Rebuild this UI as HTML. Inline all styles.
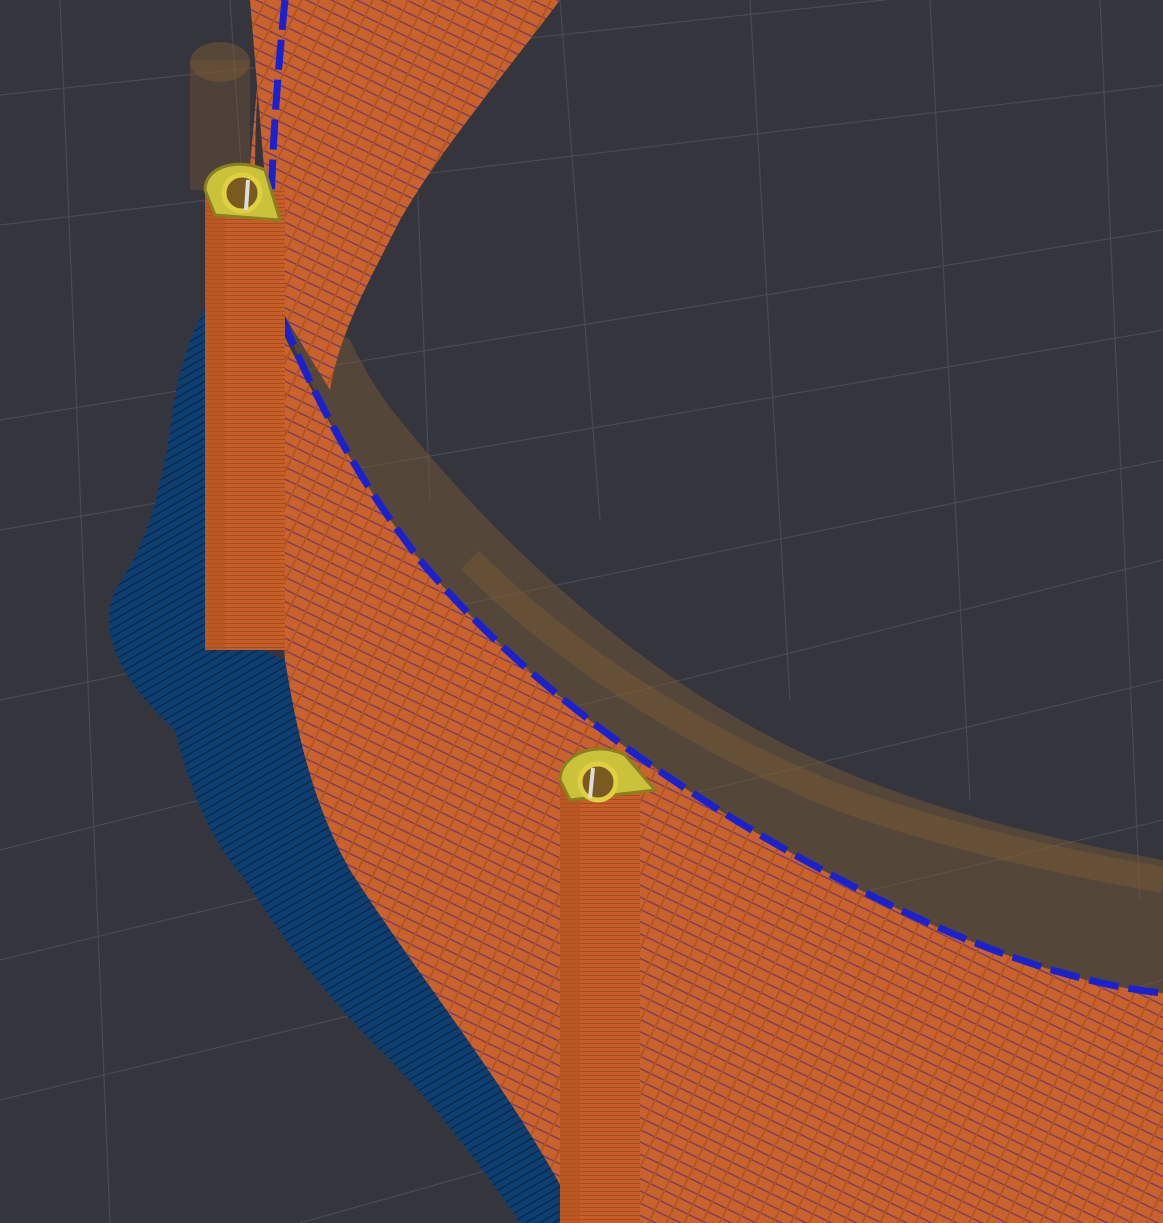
<!DOCTYPE html>
<html><head><meta charset="utf-8"><style>
html,body{margin:0;padding:0;background:#35353d;width:1163px;height:1223px;overflow:hidden}
</style></head><body>
<svg width="1163" height="1223" viewBox="0 0 1163 1223" xmlns="http://www.w3.org/2000/svg">
<defs>
<pattern id="stripes" width="16" height="11" patternUnits="userSpaceOnUse" patternTransform="rotate(26)">
<rect width="16" height="11" fill="#c9622b"/>
<rect y="8" width="16" height="1.5" fill="#7a3d6a"/>
<rect x="14" width="2" height="11" fill="#b4551f"/>
</pattern>
<pattern id="hstripes" width="6" height="4" patternUnits="userSpaceOnUse">
<rect width="6" height="4" fill="#c55e28"/>
<rect y="3" width="6" height="1" fill="#a84c1e"/>
</pattern>
<pattern id="bstripes" width="8" height="7" patternUnits="userSpaceOnUse" patternTransform="rotate(-30)">
<rect width="8" height="7" fill="#0e3f70"/>
<rect y="5" width="8" height="1.5" fill="#072a4e"/>
</pattern>
</defs>
<rect width="1163" height="1223" fill="#35353d"/>
<g stroke="#4a4a54" stroke-width="1.2" fill="none">
<path d="M0 95 L1163 -30"/><path d="M0 225 L1163 85"/><path d="M0 420 L1163 230"/><path d="M0 530 L1163 330"/><path d="M0 700 L1163 460"/><path d="M0 850 L1163 560"/><path d="M0 960 L1163 680"/><path d="M0 1100 L1163 820"/><path d="M300 1223 L1163 980"/>
<path d="M60 0 L110 1223"/><path d="M410 0 L430 500"/><path d="M560 0 L600 520"/><path d="M750 0 L790 700"/><path d="M930 0 L970 800"/><path d="M1100 0 L1140 900"/><path d="M230 0 L250 300"/>
</g>
<!-- blue skirt -->
<path d="M215 290 C190 330 175 380 170 430 C160 490 150 540 115 590 C95 640 130 690 175 730 C190 790 210 840 245 880 C290 950 330 1000 380 1050 C430 1100 470 1150 520 1223 L620 1223 C520 1100 420 980 350 870 C310 800 295 720 285 660 L240 640 Z" fill="url(#bstripes)"/>
<!-- translucent inner ring -->
<path d="M272 290 C300 370 350 470 420 560 C520 680 680 800 880 900 C980 950 1080 985 1163 993 L1163 860 C1000 830 860 790 740 720 C600 640 480 520 400 420 C375 390 360 360 350 340 Z" fill="#7a5a35" opacity="0.45"/>
<path d="M470 560 C560 650 680 730 820 790 C920 830 1050 860 1163 880" stroke="#8a6035" stroke-width="26" fill="none" opacity="0.35"/>
<!-- inner face upper -->
<path d="M250 0 L560 0 C500 80 440 150 400 220 C370 280 340 330 330 390 L275 300 Z" fill="url(#stripes)"/>
<!-- outer wall -->
<path d="M265 0 C255 100 250 200 262 290 C300 370 350 470 420 560 C520 680 680 800 880 900 C980 950 1080 985 1163 993 L1163 1223 L580 1223 C520 1100 420 980 350 870 C310 800 295 720 285 660 L245 220 Z" fill="url(#stripes)"/>
<!-- blue dashed edge -->
<path d="M285 0 C275 100 268 200 272 290 C300 370 350 470 420 560 C520 680 680 800 880 900 C980 950 1080 985 1163 993" stroke="#1a22d0" stroke-width="7" fill="none" stroke-dasharray="30 10"/>
<!-- ghost pillar -->
<rect x="190" y="60" width="60" height="130" fill="#7a5a35" opacity="0.35"/>
<ellipse cx="220" cy="62" rx="30" ry="20" fill="#7a5a35" opacity="0.5"/>
<!-- pillars -->
<rect x="205" y="190" width="80" height="460" fill="url(#hstripes)"/>
<rect x="205" y="190" width="20" height="460" fill="#b35322" opacity="0.6"/>
<rect x="560" y="775" width="80" height="448" fill="url(#hstripes)"/>
<rect x="560" y="775" width="20" height="448" fill="#b35322" opacity="0.6"/>
<path d="M205 190 C205 165 240 158 265 170 L280 220 L215 215 Z" fill="#c9c23a" stroke="#8a8020" stroke-width="3"/>
<circle cx="242" cy="193" r="18" fill="#7a5a20" stroke="#e0d040" stroke-width="5"/>
<line x1="248" y1="180" x2="246" y2="210" stroke="#ddd" stroke-width="4"/>
<path d="M560 780 C560 755 595 740 625 755 L655 790 L570 800 Z" fill="#c9c23a" stroke="#8a8020" stroke-width="3"/>
<circle cx="598" cy="782" r="18" fill="#7a5a20" stroke="#e0d040" stroke-width="5"/>
<line x1="593" y1="768" x2="590" y2="798" stroke="#ddd" stroke-width="4"/>
</svg>
</body></html>
